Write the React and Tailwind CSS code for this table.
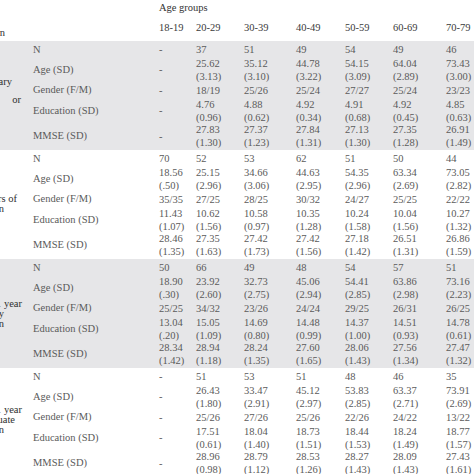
import React from 'react';

const ageCols = ['18-19', '20-29', '30-39', '40-49', '50-59', '60-69', '70-79'];
const rowLabels = ['N', 'Age (SD)', 'Gender (F/M)', 'Education (SD)', 'MMSE (SD)'];

// each group: label lines (text + right edge offset), shaded band, rows of values
const groups = [
    {
        shaded: true,
        labelClass: 'gap-[8px] pb-[9px]',
        label: [
            { text: 'Primary', end: 12 },
            { text: 'or', end: 21 },
        ],
        rows: [
            ['-', '37', '51', '49', '54', '49', '46'],
            ['-', '25.62|(3.13)', '35.12|(3.10)', '44.78|(3.22)', '54.15|(3.09)', '64.04|(2.89)', '73.43|(3.00)'],
            ['-', '18/19', '25/26', '25/24', '27/27', '25/24', '23/23'],
            ['-', '4.76|(0.96)', '4.88|(0.62)', '4.92|(0.34)', '4.91|(0.68)', '4.92|(0.45)', '4.85|(0.63)'],
            ['-', '27.83|(1.30)', '27.37|(1.23)', '27.84|(1.31)', '27.13|(1.30)', '27.35|(1.28)', '26.91|(1.49)'],
        ],
    },
    {
        shaded: false,
        labelClass: 'pb-[2px]',
        label: [
            { text: '12 years of', end: 17 },
            { text: 'education', end: 4 },
        ],
        rows: [
            ['70', '52', '53', '62', '51', '50', '44'],
            ['18.56|(.50)', '25.15|(2.96)', '34.66|(3.06)', '44.63|(2.95)', '54.35|(2.96)', '63.34|(2.69)', '73.05|(2.82)'],
            ['35/35', '27/25', '28/25', '30/32', '24/27', '25/25', '22/22'],
            ['11.43|(1.07)', '10.62|(1.56)', '10.58|(0.97)', '10.35|(1.28)', '10.24|(1.58)', '10.04|(1.56)', '10.27|(1.32)'],
            ['28.46|(1.35)', '27.35|(1.63)', '27.42|(1.73)', '27.42|(1.56)', '27.18|(1.42)', '26.51|(1.31)', '26.86|(1.59)'],
        ],
    },
    {
        shaded: true,
        labelClass: '',
        label: [
            { text: 'At least 1 year', end: 22 },
            { text: 'university', end: 4 },
            { text: 'education', end: 4 },
        ],
        rows: [
            ['50', '66', '49', '48', '54', '57', '51'],
            ['18.90|(.30)', '23.92|(2.60)', '32.73|(2.75)', '45.06|(2.94)', '54.41|(2.85)', '63.86|(2.98)', '73.16|(2.23)'],
            ['25/25', '34/32', '23/26', '24/24', '29/25', '26/31', '26/25'],
            ['13.04|(.20)', '15.05|(1.09)', '14.69|(0.80)', '14.48|(0.99)', '14.37|(1.00)', '14.51|(0.93)', '14.78|(0.61)'],
            ['28.34|(1.42)', '28.94|(1.18)', '28.24|(1.35)', '27.60|(1.65)', '28.06|(1.43)', '27.56|(1.34)', '27.47|(1.32)'],
        ],
    },
    {
        shaded: false,
        labelClass: 'pb-[6px]',
        label: [
            { text: 'At least 1 year', end: 22 },
            { text: 'graduate', end: 15 },
            { text: 'education', end: 4 },
        ],
        rows: [
            ['-', '51', '53', '51', '48', '46', '35'],
            ['-', '26.43|(1.80)', '33.47|(2.91)', '45.12|(2.97)', '53.83|(2.85)', '63.37|(2.71)', '73.91|(2.69)'],
            ['-', '25/26', '27/26', '25/26', '22/26', '24/22', '13/22'],
            ['-', '17.51|(0.61)', '18.04|(1.40)', '18.73|(1.51)', '18.44|(1.53)', '18.24|(1.49)', '18.77|(1.57)'],
            ['-', '28.96|(0.98)', '28.79|(1.12)', '28.53|(1.26)', '28.27|(1.43)', '28.09|(1.43)', '27.43|(1.61)'],
        ],
    },
];

const gridCols = 'grid grid-cols-[33px_126px_37px_48px_52px_49px_48px_53px_1fr]';
const rowHeights = ['h-[17px]', 'h-[23px]', 'h-[18px]', 'h-[23px]', 'h-[28px]'];

const Cell = ({ value }) => {
    const lines = value.split('|');
    return (
        <div className="flex flex-col justify-center leading-[13px] whitespace-nowrap">
            {lines.map((l, i) => (
                <span key={i}>{l}</span>
            ))}
        </div>
    );
};

const LabelLine = ({ text, end }) => (
    // right edge of the line sits at `end` px from the page edge, the rest is cut off
    <div className="flex justify-end w-[120px] whitespace-nowrap" style={{ marginLeft: end - 120 }}>
        {text}
    </div>
);

export default function App() {
    return (
        <div
            className="w-[474px] h-[474px] overflow-hidden bg-white text-[10.5px] text-[#5a5a5a]"
            style={{ fontFamily: '"Liberation Serif", "Times New Roman", serif' }}
        >
            {/* header */}
            <div className={`${gridCols} h-[41px]`}>
                <div className="col-start-1 row-start-1 row-span-2 flex flex-col justify-end text-[#2e2e2e]">
                    <LabelLine text="Education" end={5} />
                </div>
                <div className="col-start-2 row-start-1 row-span-2" />
                <div className="col-start-3 col-span-7 row-start-1 h-[15px] flex items-center text-[#333]">
                    Age groups
                </div>
                {ageCols.map((c) => (
                    <div key={c} className="row-start-2 h-[26px] flex items-center text-[#3a3a3a]">
                        {c}
                    </div>
                ))}
            </div>

            {groups.map((g, gi) => (
                <div key={gi} className={`${gridCols} ${g.shaded ? 'bg-[#e6e6e8]' : 'bg-white'}`}>
                    <div
                        className={`col-start-1 row-start-1 row-span-5 flex flex-col justify-center leading-[10px] text-[#2e2e2e] ${g.labelClass}`}
                    >
                        {g.label.map((l, i) => (
                            <LabelLine key={i} text={l.text} end={l.end} />
                        ))}
                    </div>
                    {g.rows.map((r, ri) => (
                        <React.Fragment key={ri}>
                            <div className={`col-start-2 ${rowHeights[ri]} flex items-center`}>{rowLabels[ri]}</div>
                            {r.map((v, vi) => (
                                <div key={vi} className={`${rowHeights[ri]} flex items-center`}>
                                    <Cell value={v} />
                                </div>
                            ))}
                        </React.Fragment>
                    ))}
                </div>
            ))}
        </div>
    );
}
